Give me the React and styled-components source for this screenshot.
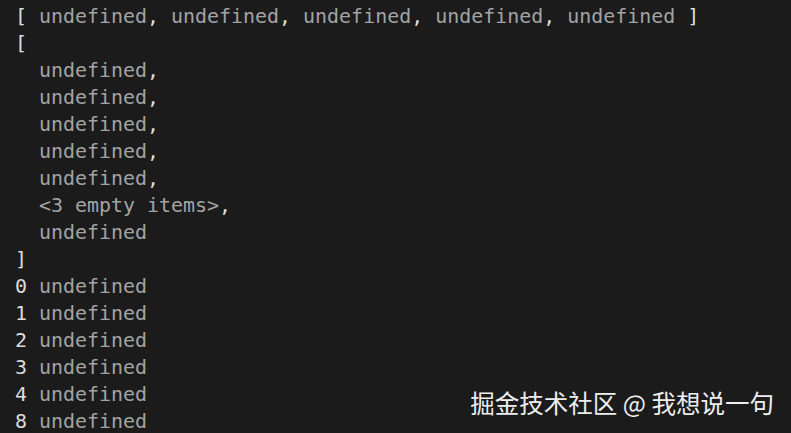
import styled, { createGlobalStyle } from "styled-components";

const GlobalStyle = createGlobalStyle`
    html, body{
        margin: 0;
        padding: 0;
        background: #1b1b1c;
    }
`;

const lines = [
    [["b", "[ "], ["u", "undefined"], ["b", ", "], ["u", "undefined"], ["b", ", "], ["u", "undefined"], ["b", ", "], ["u", "undefined"], ["b", ", "], ["u", "undefined"], ["b", " ]"]],
    [["b", "["]],
    [["b", "  "], ["u", "undefined"], ["b", ","]],
    [["b", "  "], ["u", "undefined"], ["b", ","]],
    [["b", "  "], ["u", "undefined"], ["b", ","]],
    [["b", "  "], ["u", "undefined"], ["b", ","]],
    [["b", "  "], ["u", "undefined"], ["b", ","]],
    [["b", "  "], ["u", "<3 empty items>"], ["b", ","]],
    [["b", "  "], ["u", "undefined"]],
    [["b", "]"]],
    [["b", "0 "], ["u", "undefined"]],
    [["b", "1 "], ["u", "undefined"]],
    [["b", "2 "], ["u", "undefined"]],
    [["b", "3 "], ["u", "undefined"]],
    [["b", "4 "], ["u", "undefined"]],
    [["b", "8 "], ["u", "undefined"]],
];

export default function App(){
    return(
        <>
            <GlobalStyle/>
            <Terminal>
                {lines.map((line, i)=>{
                    return(
                        <Linha key={i}>
                            {line.map(([tipo, texto], j)=>(
                                <Trecho key={j} $cinza={tipo === "u"}>{texto}</Trecho>
                            ))}
                        </Linha>
                    )
                })}
                <Marca>掘金技术社区 @ 我想说一句</Marca>
            </Terminal>
        </>
    )
}

const Terminal = styled.div`
    position: relative;
    width: 791px;
    height: 433px;
    box-sizing: border-box;
    padding: 3px 0 0 15px;
    background: #1b1b1c;
    overflow: hidden;
`;

const Linha = styled.div`
    font-family: 'DejaVu Sans Mono', 'Liberation Mono', monospace;
    font-size: 19.95px;
    line-height: 27px;
    height: 27px;
    white-space: pre;
    color: #dcdcdc;
`;

const Trecho = styled.span`
    color: ${props => props.$cinza ? "#a3a3a3" : "#dcdcdc"};
`;

const Marca = styled.div`
    position: absolute;
    right: 17px;
    top: 388px;
    font-family: 'Noto Sans CJK SC', 'Noto Sans', sans-serif;
    font-size: 24.5px;
    line-height: 30px;
    color: #eeeeee;
    white-space: nowrap;
`;
